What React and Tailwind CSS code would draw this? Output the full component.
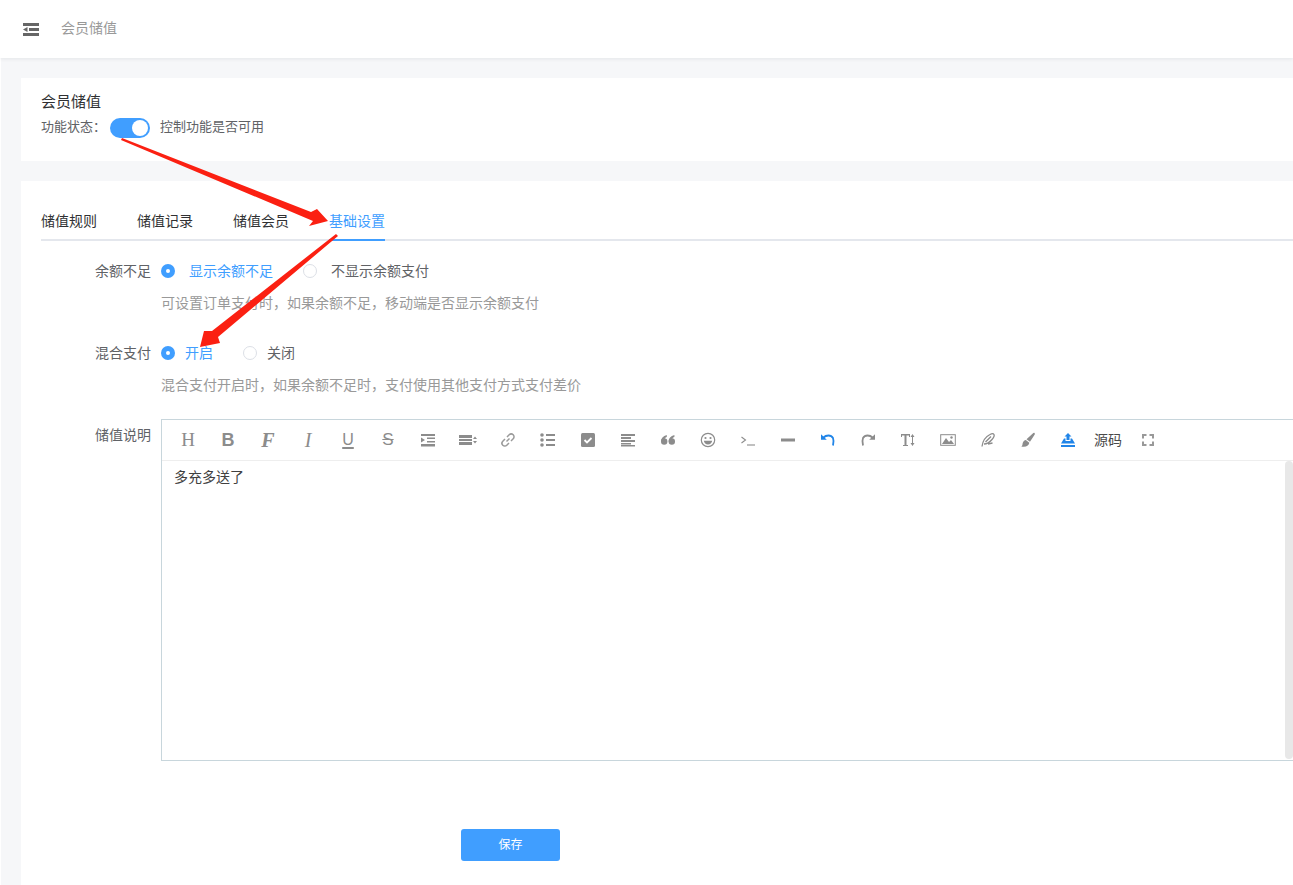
const cjk = { fontFamily: '"Noto Sans CJK SC", sans-serif' };

const Svg = ({ children, color = "#8c8c8c" }) => (
  <svg width="16" height="16" viewBox="0 0 16 16" fill={color} stroke="none">
    {children}
  </svg>
);

const Glyph = ({ className, children }) => (
  <span className={`block leading-4 text-[#8c8c8c] ${className}`} style={{ fontFamily: '"Liberation Serif", serif' }}>
    {children}
  </span>
);

const lineIcon = (d, w = 1.5) => <path d={d} fill="none" stroke="currentColor" strokeWidth={w} />;

const tools = [
  <Glyph className="text-[19px]">H</Glyph>,
  <span className="block text-[18px] leading-4 font-bold text-[#8c8c8c]" style={{ fontFamily: '"Liberation Sans", sans-serif' }}>B</span>,
  <Glyph className="text-[20px] font-bold italic">F</Glyph>,
  <Glyph className="text-[20px] italic">I</Glyph>,
  <span className="block text-[16px] leading-4 text-[#8c8c8c] underline decoration-[1.5px] underline-offset-2" style={{ fontFamily: '"Liberation Sans", sans-serif' }}>U</span>,
  <span className="block text-[17px] leading-4 text-[#8c8c8c] line-through" style={{ fontFamily: '"Liberation Sans", sans-serif' }}>S</span>,
  <Svg><path d="M1 2h14v2H1zM7 5.500h8V7H7zM7 9h8v1.500H7zM1 12h14v2.500H1zM1 5.500l4 2.500-4 2.500z" /></Svg>,
  <svg width="18" height="16" viewBox="0 0 18 16" fill="#8c8c8c">
    <path d="M0 3h13v3H0zM0 7h13v2H0zM0 10h13v3H0zM16 4.500l2 2.500h-4zM16 11.500l2-2.500h-4z" />
  </svg>,
  <svg width="16" height="16" viewBox="0 0 16 16" className="text-[#9a9a9a]">
    {lineIcon("M6.500 9.500l3-3M5 7L2.800 9.200a2.800 2.800 0 0 0 4 4L9 11M7 5l2.200-2.200a2.800 2.800 0 0 1 4 4L11 9")}
  </svg>,
  <Svg>
    <circle cx="2" cy="3" r="1.800" />
    <circle cx="2" cy="8" r="1.800" />
    <circle cx="2" cy="13" r="1.800" />
    <path d="M6 2h9v2H6zM6 7h9v2H6zM6 12h9v2H6z" />
  </Svg>,
  <svg width="16" height="16" viewBox="0 0 16 16">
    <rect x="1" y="1" width="14" height="14" rx="1.500" fill="#8c8c8c" />
    <path d="M4.500 8l2.500 2.500 4.500-4.500" fill="none" stroke="#fff" strokeWidth="1.800" />
  </svg>,
  <Svg><path d="M1 2h14v2H1zM1 5h10v2H1zM1 8h14v2H1zM1 11h10v1.500H1zM1 13h14v1.500H1z" /></Svg>,
  <Svg>
    <circle cx="4.200" cy="9.500" r="3.200" />
    <circle cx="11.800" cy="9.500" r="3.200" />
    <path d="M1 9.500C1 6.500 3 4 6.800 3v2C5 5.500 4.500 6.500 4.500 8zM8.600 9.500C8.600 6.500 10.600 4 14.400 3v2C12.600 5.500 12.100 6.500 12.100 8z" />
  </Svg>,
  <svg width="16" height="16" viewBox="0 0 16 16" className="text-[#8c8c8c]">
    <circle cx="8" cy="8" r="6.700" fill="none" stroke="currentColor" strokeWidth="1.200" />
    <circle cx="5.500" cy="6" r="1.100" fill="currentColor" />
    <circle cx="10.500" cy="6" r="1.100" fill="currentColor" />
    <path d="M3.800 8.800h8.400c-.4 2.300-2 3.700-4.200 3.700s-3.800-1.400-4.200-3.700z" fill="currentColor" />
  </svg>,
  <svg width="16" height="16" viewBox="0 0 16 16" className="text-[#8c8c8c]">
    {lineIcon("M1.500 5l4 3-4 3", 1.100)}
    {lineIcon("M7 13h8", 1.100)}
  </svg>,
  <Svg><rect x="1" y="6.500" width="14" height="3" /></Svg>,
  <svg width="16" height="16" viewBox="0 0 16 16" className="text-[#2185e8]">
    {lineIcon("M3.500 5.500C6 3 11 2.500 13 6c1 2.500.6 5 0 7.500", 1.800)}
    <path d="M1 2.200v5.600h5.800z" fill="currentColor" />
  </svg>,
  <svg width="16" height="16" viewBox="0 0 16 16" className="text-[#8c8c8c]">
    {lineIcon("M12.500 5.500C10 3 5 2.500 3 6c-1 2.500-.6 5 0 7.500", 1.800)}
    <path d="M15 2.200v5.600H9.200z" fill="currentColor" />
  </svg>,
  <Svg><path d="M1 2h9v3H9V3.500H6.500V13H8v1H3v-1h1.500V3.500H2V5H1zM12.500 2l2 3H13v6h1.500l-2 3-2-3H12V5h-1.500z" /></Svg>,
  <svg width="16" height="16" viewBox="0 0 16 16" className="text-[#8c8c8c]">
    <rect x=".7" y="2.700" width="14.600" height="10.600" fill="none" stroke="currentColor" />
    <path d="M2 12l4-6 3 4 2-2 3 4z" fill="currentColor" />
    <circle cx="11.500" cy="5.500" r="1.200" fill="currentColor" />
  </svg>,
  <svg width="16" height="16" viewBox="0 0 16 16" className="text-[#8c8c8c]">
    {lineIcon("M2 14.500c.5-4 3-9.500 8-12 1.500-.8 3.500-.8 4 0 .5 1-.3 3-2 5-2.500 3-5.500 4.500-8 4.500M5.500 10L11 4.500M8 12l4.500-1", 1.300)}
  </svg>,
  <Svg><path d="M14.500 1c.6.500.4 1.300-.1 2L10 9.800 6.500 7.300 12.500 1.700c.7-.6 1.400-1.100 2-.7zM5.800 8l3.500 2.800c-.2 2.700-3.200 4.700-8 3.700 1.500-1 1-2.300 1.500-3.700.5-1.400 1.600-2.500 3-2.800z" /></Svg>,
  <Svg color="#2185e8"><path d="M8 1l3.500 3.500H9.500V8h-3V4.500h-2zM4 6.500h1.500V9h5V6.500H12l3 5H1zM1 13h14v2H1z" /></Svg>,
  <span className="block pb-0.5 text-[14px] leading-[18px] text-[#4a4a4a]" style={cjk}>源码</span>,
  <Svg color="#999999"><path d="M2 2h4.500v2H4v2.500H2zM9.500 2H14v4.500h-2V4H9.500zM2 9.500h2V12h2.500v2H2zM12 9.500h2V14H9.500v-2H12z" /></Svg>,
];

const Radio = ({ checked, label, gap, last }) => (
  <label className={`flex items-center ${last ? "" : "mr-[30px]"} ${gap}`}>
    {checked ? (
      <span className="flex h-[14px] w-[14px] items-center justify-center rounded-full bg-[#409eff]">
        <span className="h-1 w-1 rounded-full bg-white" />
      </span>
    ) : (
      <span className="h-[14px] w-[14px] rounded-full border border-[#dcdfe6] bg-white" />
    )}
    <span className={`pb-0.5 text-sm leading-[18px] ${checked ? "text-[#409eff]" : "text-[#606266]"}`}>{label}</span>
  </label>
);

const Row = ({ label, children, className = "" }) => (
  <div className={`flex ${className}`}>
    <div className="w-[110px] shrink-0 pb-0.5 text-right text-sm leading-[18px] text-[#606266]">{label}</div>
    <div className="ml-[10px] min-w-0 flex-1">{children}</div>
  </div>
);

const Hint = ({ children }) => <div className="mt-3 pb-0.5 text-sm leading-[18px] text-[#999999]">{children}</div>;

export default function App() {
  const tabs = ["储值规则", "储值记录", "储值会员", "基础设置"];

  return (
    <div className="relative h-[885px] w-[1293px] overflow-hidden bg-[#f6f7f9]" style={cjk}>
      {/* top bar */}
      <header className="relative z-10 flex h-[58px] items-center bg-white pl-[23px] shadow-[0_1px_4px_rgba(0,21,41,0.08)]">
        <svg width="16" height="13" viewBox="0 0 16 13" fill="#666666">
          <path d="M0 0h16v3H0zM6 5h10v3H6zM0 10h16v3H0zM0 6.500L4.500 4v5z" />
        </svg>
        <span className="ml-[22px] pb-1 text-sm text-[#999999]">会员储值</span>
      </header>

      <main className="h-[827px] border-l border-white pt-5 pl-5">
        {/* status card */}
        <section className="bg-white pt-[13px] pb-[23px] pl-5">
          <h1 className="text-[15px] leading-5 font-normal text-[#303133]">会员储值</h1>
          <div className="mt-[7px] flex h-5 items-center text-[13px] text-[#606266]">
            <span className="w-[69px] pb-1">{"功能状态\uFF1A"}</span>
            <span className="flex h-5 w-10 items-center justify-end rounded-full bg-[#409eff] pr-0.5">
              <span className="h-4 w-4 rounded-full bg-white" />
            </span>
            <span className="ml-[10px] pb-1">控制功能是否可用</span>
          </div>
        </section>

        {/* settings card */}
        <section className="mt-5 h-[800px] bg-white pt-5 pl-5">
          <div className="flex h-10 gap-10 border-b-2 border-[#e4e7ed]">
            {tabs.map((t, i) => (
              <div
                key={t}
                className={`-mb-0.5 h-10 border-b-2 pt-2.5 text-sm leading-[18px] ${
                  i === 3 ? "border-[#409eff] text-[#409eff]" : "border-transparent text-[#303133]"
                }`}
              >
                {t}
              </div>
            ))}
          </div>

          <Row label="余额不足" className="mt-5">
            <div className="flex h-5 items-center">
              <Radio checked label="显示余额不足" gap="gap-[14px]" />
              <Radio label="不显示余额支付" gap="gap-[14px]" last />
            </div>
            <Hint>{"可设置订单支付时\uFF0C如果余额不足\uFF0C移动端是否显示余额支付"}</Hint>
          </Row>

          <Row label="混合支付" className="mt-[30px]">
            <div className="flex h-5 items-center">
              <Radio checked label="开启" gap="gap-[10px]" />
              <Radio label="关闭" gap="gap-[10px]" last />
            </div>
            <Hint>{"混合支付开启时\uFF0C如果余额不足时\uFF0C支付使用其他支付方式支付差价"}</Hint>
          </Row>

          <Row label="储值说明" className="mt-6 [&>div:first-child]:pt-1.5">
            <div className="flex h-[342px] flex-col border-y border-l border-[#c8d6dc]">
              <div className="flex h-[41px] shrink-0 items-center border-b border-[#eeeeee] pl-1.5">
                {tools.map((tool, i) => (
                  <div key={i} className="flex h-5 w-10 items-center justify-center">
                    {tool}
                  </div>
                ))}
              </div>
              <div className="flex min-h-0 flex-1 justify-between pt-1.5 pl-3">
                <p className="text-sm leading-[18px] text-[#404040]">多充多送了</p>
                <div className="-mt-1.5 mb-px w-2 rounded-t-[4px] rounded-b-[4px] bg-[#e8e8e8]" />
              </div>
            </div>
          </Row>

          <button className="mt-[68px] ml-[420px] block h-8 w-[99px] rounded-[3px] bg-[#409eff] pb-0.5 text-xs text-white">
            保存
          </button>
        </section>
      </main>

      {/* annotation arrows */}
      <svg className="absolute top-0 left-0 z-20" width="1293" height="885" fill="#fb2012">
        <polygon points="122,138 311,212 317,209 328,221 309,226 313,221 121,140" />
        <polygon points="336,234 338,236 218,337 220,343 200,347 204,331 212,331" />
      </svg>
    </div>
  );
}
